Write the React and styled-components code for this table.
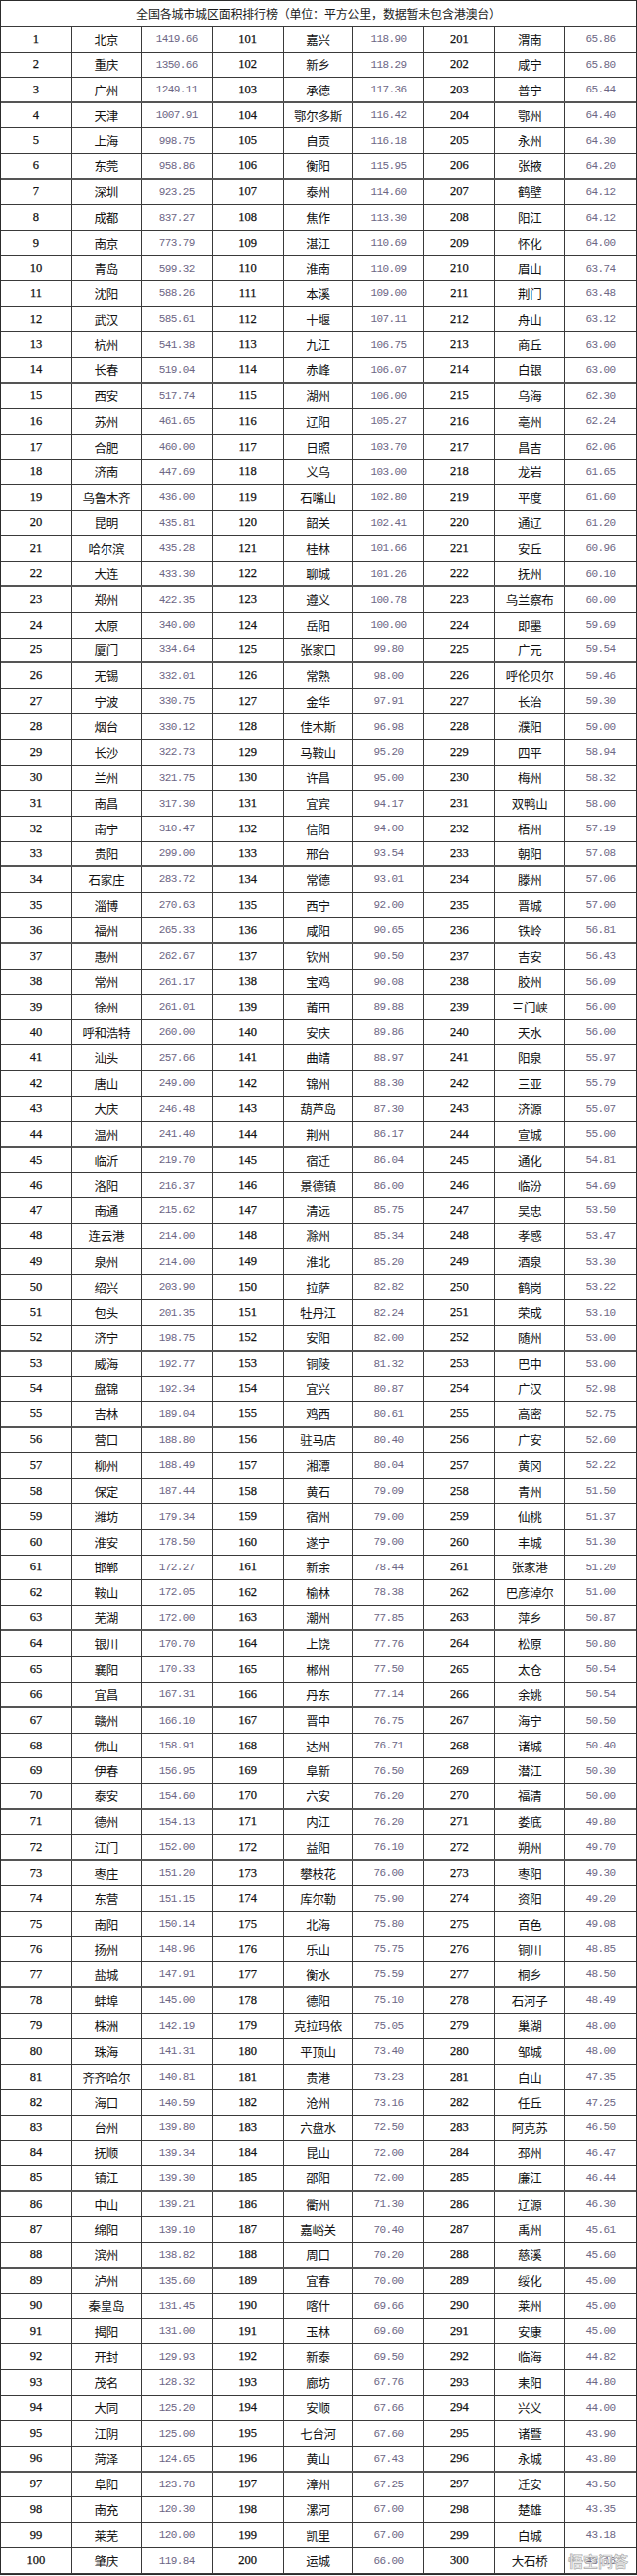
import React from "react";
import styled, { createGlobalStyle } from "styled-components";

const GlobalStyle = createGlobalStyle`
  html, body {
    margin: 0;
    padding: 0;
    background: #fff;
  }
  * {
    box-sizing: border-box;
  }
`;

const g1 =
  "北京:1419.66,重庆:1350.66,广州:1249.11,天津:1007.91,上海:998.75,东莞:958.86,深圳:923.25,成都:837.27,南京:773.79,青岛:599.32,沈阳:588.26,武汉:585.61,杭州:541.38,长春:519.04,西安:517.74,苏州:461.65,合肥:460.00,济南:447.69,乌鲁木齐:436.00,昆明:435.81,哈尔滨:435.28,大连:433.30,郑州:422.35,太原:340.00,厦门:334.64,无锡:332.01,宁波:330.75,烟台:330.12,长沙:322.73,兰州:321.75,南昌:317.30,南宁:310.47,贵阳:299.00,石家庄:283.72,淄博:270.63,福州:265.33,惠州:262.67,常州:261.17,徐州:261.01,呼和浩特:260.00,汕头:257.66,唐山:249.00,大庆:246.48,温州:241.40,临沂:219.70,洛阳:216.37,南通:215.62,连云港:214.00,泉州:214.00,绍兴:203.90,包头:201.35,济宁:198.75,威海:192.77,盘锦:192.34,吉林:189.04,营口:188.80,柳州:188.49,保定:187.44,潍坊:179.34,淮安:178.50,邯郸:172.27,鞍山:172.05,芜湖:172.00,银川:170.70,襄阳:170.33,宜昌:167.31,赣州:166.10,佛山:158.91,伊春:156.95,泰安:154.60,德州:154.13,江门:152.00,枣庄:151.20,东营:151.15,南阳:150.14,扬州:148.96,盐城:147.91,蚌埠:145.00,株洲:142.19,珠海:141.31,齐齐哈尔:140.81,海口:140.59,台州:139.80,抚顺:139.34,镇江:139.30,中山:139.21,绵阳:139.10,滨州:138.82,泸州:135.60,秦皇岛:131.45,揭阳:131.00,开封:129.93,茂名:128.32,大同:125.20,江阴:125.00,菏泽:124.65,阜阳:123.78,南充:120.30,莱芜:120.00,肇庆:119.84";

const g2 =
  "嘉兴:118.90,新乡:118.29,承德:117.36,鄂尔多斯:116.42,自贡:116.18,衡阳:115.95,泰州:114.60,焦作:113.30,湛江:110.69,淮南:110.09,本溪:109.00,十堰:107.11,九江:106.75,赤峰:106.07,湖州:106.00,辽阳:105.27,日照:103.70,义乌:103.00,石嘴山:102.80,韶关:102.41,桂林:101.66,聊城:101.26,遵义:100.78,岳阳:100.00,张家口:99.80,常熟:98.00,金华:97.91,佳木斯:96.98,马鞍山:95.20,许昌:95.00,宜宾:94.17,信阳:94.00,邢台:93.54,常德:93.01,西宁:92.00,咸阳:90.65,钦州:90.50,宝鸡:90.08,莆田:89.88,安庆:89.86,曲靖:88.97,锦州:88.30,葫芦岛:87.30,荆州:86.17,宿迁:86.04,景德镇:86.00,清远:85.75,滁州:85.34,淮北:85.20,拉萨:82.82,牡丹江:82.24,安阳:82.00,铜陵:81.32,宜兴:80.87,鸡西:80.61,驻马店:80.40,湘潭:80.04,黄石:79.09,宿州:79.00,遂宁:79.00,新余:78.44,榆林:78.38,潮州:77.85,上饶:77.76,郴州:77.50,丹东:77.14,晋中:76.75,达州:76.71,阜新:76.50,六安:76.20,内江:76.20,益阳:76.10,攀枝花:76.00,库尔勒:75.90,北海:75.80,乐山:75.75,衡水:75.59,德阳:75.10,克拉玛依:75.05,平顶山:73.40,贵港:73.23,沧州:73.16,六盘水:72.50,昆山:72.00,邵阳:72.00,衢州:71.30,嘉峪关:70.40,周口:70.20,宜春:70.00,喀什:69.66,玉林:69.60,新泰:69.50,廊坊:67.76,安顺:67.66,七台河:67.60,黄山:67.43,漳州:67.25,漯河:67.00,凯里:67.00,运城:66.00";

const g3 =
  "渭南:65.86,咸宁:65.80,普宁:65.44,鄂州:64.40,永州:64.30,张掖:64.20,鹤壁:64.12,阳江:64.12,怀化:64.00,眉山:63.74,荆门:63.48,舟山:63.12,商丘:63.00,白银:63.00,乌海:62.30,亳州:62.24,昌吉:62.06,龙岩:61.65,平度:61.60,通辽:61.20,安丘:60.96,抚州:60.10,乌兰察布:60.00,即墨:59.69,广元:59.54,呼伦贝尔:59.46,长治:59.30,濮阳:59.00,四平:58.94,梅州:58.32,双鸭山:58.00,梧州:57.19,朝阳:57.08,滕州:57.06,晋城:57.00,铁岭:56.81,吉安:56.43,胶州:56.09,三门峡:56.00,天水:56.00,阳泉:55.97,三亚:55.79,济源:55.07,宣城:55.00,通化:54.81,临汾:54.69,吴忠:53.50,孝感:53.47,酒泉:53.30,鹤岗:53.22,荣成:53.10,随州:53.00,巴中:53.00,广汉:52.98,高密:52.75,广安:52.60,黄冈:52.22,青州:51.50,仙桃:51.37,丰城:51.30,张家港:51.20,巴彦淖尔:51.00,萍乡:50.87,松原:50.80,太仓:50.54,余姚:50.54,海宁:50.50,诸城:50.40,潜江:50.30,福清:50.00,娄底:49.80,朔州:49.70,枣阳:49.30,资阳:49.20,百色:49.08,铜川:48.85,桐乡:48.50,石河子:48.49,巢湖:48.00,邹城:48.00,白山:47.35,任丘:47.25,阿克苏:46.50,邳州:46.47,廉江:46.44,辽源:46.30,禹州:45.61,慈溪:45.60,绥化:45.00,莱州:45.00,安康:45.00,临海:44.82,耒阳:44.80,兴义:44.00,诸暨:43.90,永城:43.80,迁安:43.50,楚雄:43.35,白城:43.18,大石桥:43.16";

const parse = (s) => s.split(",").map((p) => p.split(":"));
const groups = [parse(g1), parse(g2), parse(g3)];

const Sheet = styled.div`
  position: relative;
  width: 640px;
  border: 1px solid #2c2c2c;
  background: #fff;
`;

const Title = styled.div`
  height: 26px;
  display: flex;
  align-items: center;
  justify-content: center;
  border-bottom: 1px solid #3a3a3a;
  font-family: "Noto Sans CJK SC", sans-serif;
  font-size: 12px;
  color: #1a1a1a;
  letter-spacing: -0.2px;
`;

const Row = styled.div`
  display: grid;
  grid-template-columns: repeat(9, 1fr);
  height: 25.62px;
  border-bottom: ${({ $thick }) => ($thick ? "2px solid #555" : "1px solid #3a3a3a")};
  &:last-of-type {
    border-bottom: none;
  }
`;

const Cell = styled.div`
  display: flex;
  align-items: center;
  justify-content: center;
  border-right: 1px solid #3a3a3a;
  overflow: hidden;
  white-space: nowrap;
  &:last-child {
    border-right: none;
  }
`;

const Rank = styled(Cell)`
  font-family: "Liberation Serif", serif;
  font-size: 12.5px;
  font-weight: 500;
  color: #111;
  -webkit-text-stroke: 0.25px #111;
`;

const City = styled(Cell)`
  font-family: "Noto Sans CJK SC", sans-serif;
  font-size: 12.5px;
  color: #111;
  letter-spacing: -0.3px;
`;

const Area = styled(Cell)`
  font-family: "Liberation Mono", monospace;
  font-size: 11px;
  letter-spacing: -0.6px;
  color: #6c6684;
`;

const Watermark = styled.div`
  position: absolute;
  right: 8px;
  bottom: 3px;
  font-family: "Noto Sans CJK SC", sans-serif;
  font-size: 15px;
  font-weight: 700;
  color: rgba(235, 235, 235, 0.8);
  -webkit-text-stroke: 0.7px rgba(110, 110, 110, 0.55);
  pointer-events: none;
`;

const thickRows = new Set([3, 6, 14, 22, 25, 33, 36, 44, 52, 55, 63, 66, 70, 72, 77, 85, 88, 96]);

export default function App() {
  const rows = groups[0].map((_, i) => i);
  return (
    <>
      <GlobalStyle />
      <Sheet>
        <Title>全国各城市城区面积排行榜（单位：平方公里，数据暂未包含港澳台）</Title>
        {rows.map((i) => (
          <Row key={i} $thick={thickRows.has(i + 1)}>
            {groups.map((g, k) => (
              <React.Fragment key={k}>
                <Rank>{k * 100 + i + 1}</Rank>
                <City>{g[i][0]}</City>
                <Area>{g[i][1]}</Area>
              </React.Fragment>
            ))}
          </Row>
        ))}
        <Watermark>悟空问答</Watermark>
      </Sheet>
    </>
  );
}
